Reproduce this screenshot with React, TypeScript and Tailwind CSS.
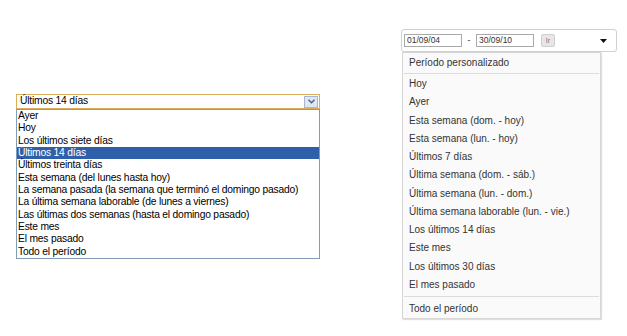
import React from 'react';

const leftOptions = [
  'Ayer',
  'Hoy',
  'Los últimos siete días',
  'Últimos 14 días',
  'Últimos treinta días',
  'Esta semana (del lunes hasta hoy)',
  'La semana pasada (la semana que terminó el domingo pasado)',
  'La última semana laborable (de lunes a viernes)',
  'Las últimas dos semanas (hasta el domingo pasado)',
  'Este mes',
  'El mes pasado',
  'Todo el período',
];

const rightOptions = [
  'Hoy',
  'Ayer',
  'Esta semana (dom. - hoy)',
  'Esta semana (lun. - hoy)',
  'Últimos 7 días',
  'Última semana (dom. - sáb.)',
  'Última semana (lun. - dom.)',
  'Última semana laborable (lun. - vie.)',
  'Los últimos 14 días',
  'Este mes',
  'Los últimos 30 días',
  'El mes pasado',
];

// select clásico abierto, estilo Windows
const OpenSelect = () => (
  <div className="w-[304px] mt-[94px] ml-[16px] text-[10.3px] tracking-[-0.2px] text-black">
    <div className="h-[15px] border border-[#dcae5a] bg-white flex items-center justify-between pl-[3px] pr-[1px]">
      <span className="leading-none">Últimos 14 días</span>
      <div className="w-[14px] h-[12px] border border-[#a7b7cf] bg-[#dde7f5] flex items-center justify-center">
        <svg width="7" height="5" viewBox="0 0 7 5">
          <path d="M0.5 0.8 L3.5 3.8 L6.5 0.8" stroke="#4d6185" strokeWidth="1.4" fill="none" />
        </svg>
      </div>
    </div>
    <div className="border border-[#7f9db9] bg-white">
      {leftOptions.map((opt, i) => (
        <div
          key={opt}
          className={
            i === 3
              ? 'h-[12.33px] leading-[12.33px] pl-[1px] bg-[#2f5fa8] text-white whitespace-nowrap'
              : 'h-[12.33px] leading-[12.33px] pl-[1px] whitespace-nowrap'
          }
        >
          {opt}
        </div>
      ))}
    </div>
  </div>
);

// selector de período con campos de fecha
const PeriodPicker = () => (
  <div className="relative w-[216px] mt-[29px] ml-[81px] text-[#333]">
    <div className="h-[23px] border border-[#d0d0d0] rounded-[3px] bg-white flex items-center pl-[2px] pr-[8px]">
      <div className="w-[58px] h-[13px] border border-[#a9a9a9] text-[8.5px] leading-[11px] pl-[2px] text-[#333]">01/09/04</div>
      <span className="w-[14px] text-center text-[9px]">-</span>
      <div className="w-[58px] h-[13px] border border-[#a9a9a9] text-[8.5px] leading-[11px] pl-[2px] text-[#333]">30/09/10</div>
      <div className="ml-[7px] w-[14px] h-[13px] border border-[#cfcfcf] rounded-[2px] bg-[#e6e6e6] text-[7px] leading-[11px] text-center text-[#777]">Ir</div>
      <svg className="ml-auto mr-[1px]" width="7" height="4" viewBox="0 0 7 4">
        <path d="M0 0 H7 L3.5 4 Z" fill="#111" />
      </svg>
    </div>
    <div className="absolute left-[1px] top-[23px] w-[199px] border border-[#d6d6d6] bg-[#fafafa] shadow-[1px_1px_1px_rgba(0,0,0,0.12)] text-[10px]">
      <div className="h-[20px] leading-[20px] pl-[6px]">Período personalizado</div>
      <div className="h-px bg-[#dcdcdc] mx-[1px] mb-[1px]" />
      {rightOptions.map(opt => (
        <div key={opt} className="h-[18.27px] leading-[18.27px] pl-[6px] whitespace-nowrap">{opt}</div>
      ))}
      <div className="h-px bg-[#dcdcdc] mx-[1px] mt-[2px] mb-[2px]" />
      <div className="h-[19px] leading-[19px] pl-[6px]">Todo el período</div>
    </div>
  </div>
);

export default function App() {
  return (
    <div className="w-[627px] h-[336px] bg-white flex items-start font-['Liberation_Sans',Arial,sans-serif]">
      <OpenSelect />
      <PeriodPicker />
    </div>
  );
}
